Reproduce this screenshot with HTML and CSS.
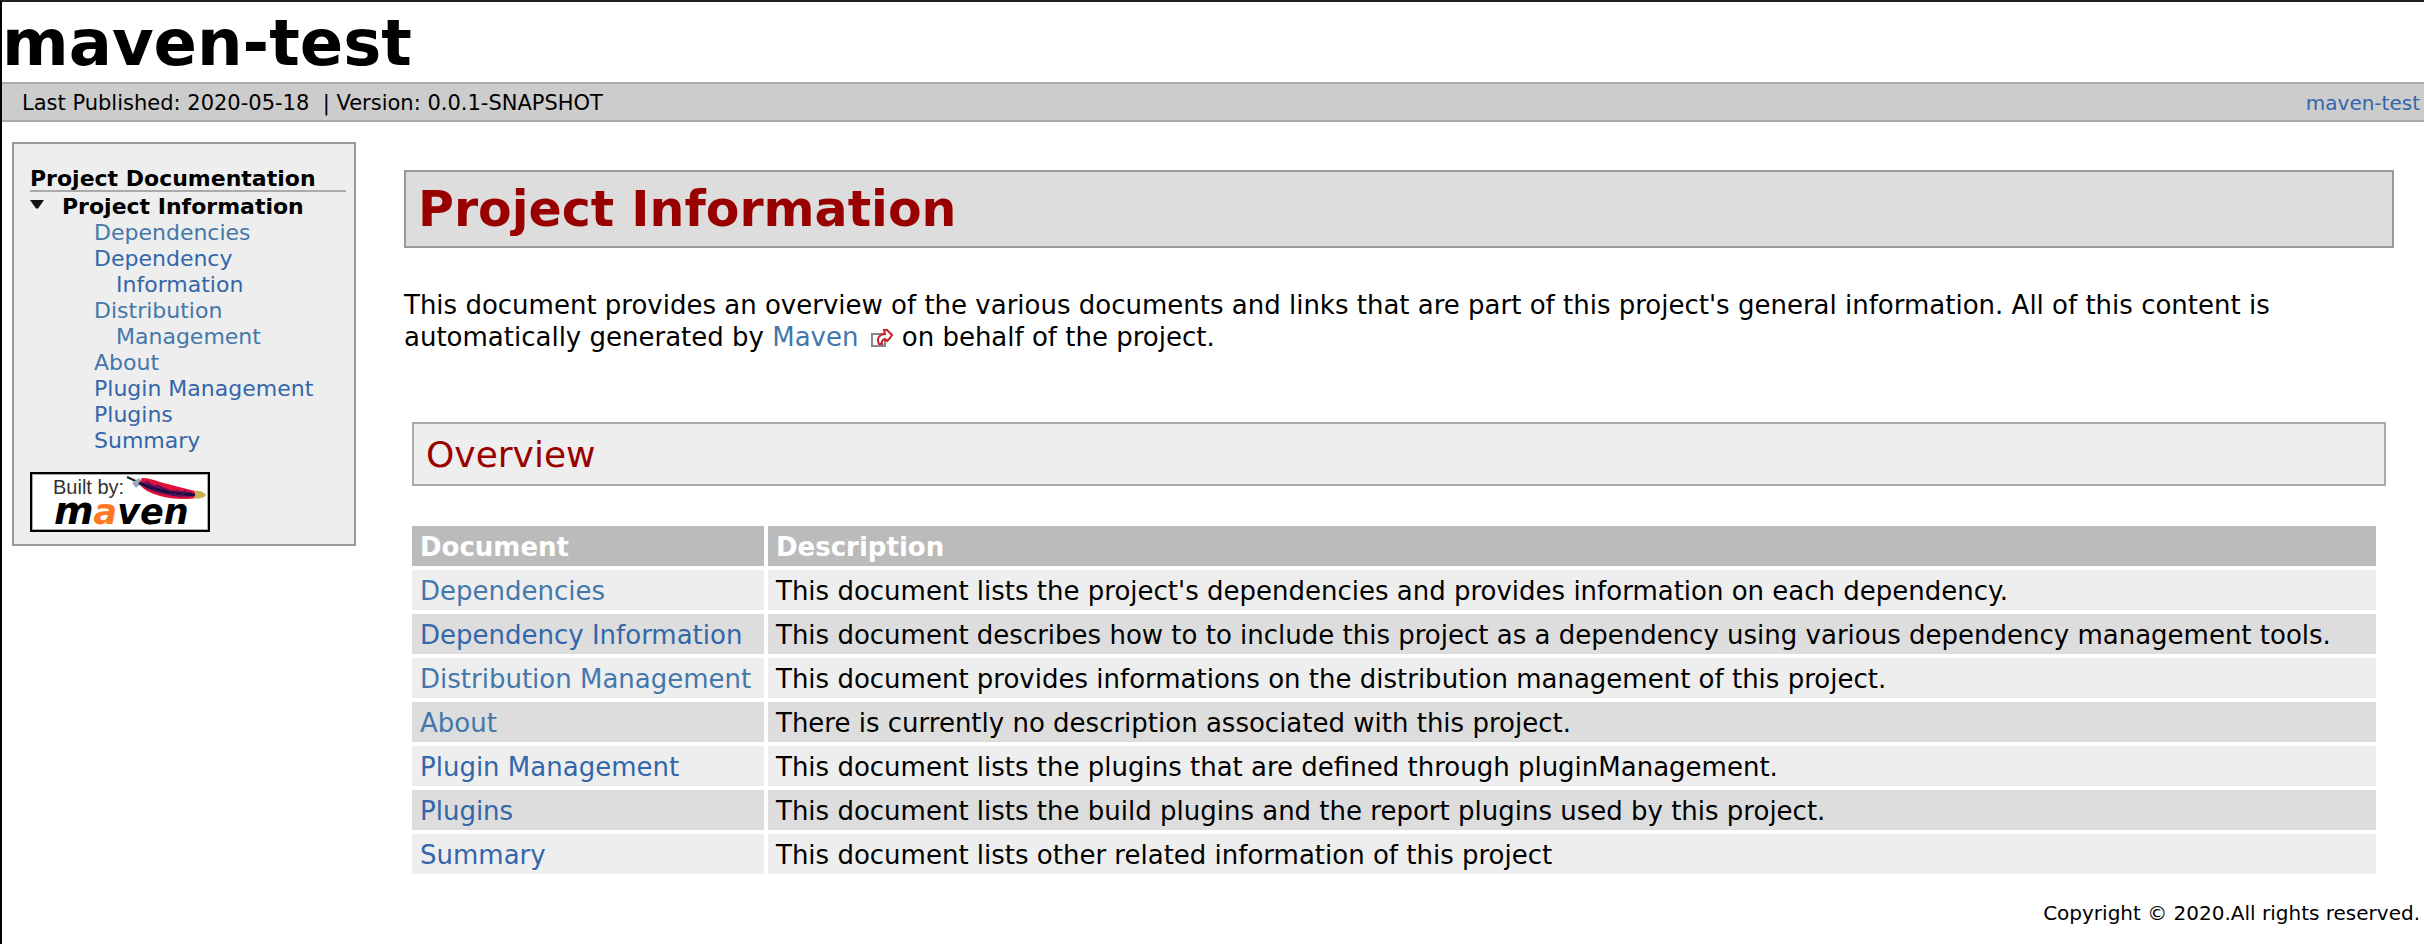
FILE: index.html
```html
<!DOCTYPE html>
<html lang="en">
<head>
<meta charset="utf-8">
<title>maven-test – Project Information</title>
<link rel="stylesheet" href="styles.css">
</head>
<body>
<header class="banner">maven-test</header>
<div class="breadcrumbs">
  <div class="published">Last Published: 2020-05-18 &nbsp;| Version: 0.0.1-SNAPSHOT</div>
  <a href="#">maven-test</a>
</div>
<div class="columns">
  <nav class="sidebar">
    <h5>Project Documentation</h5>
    <div class="group">
      <svg class="marker" width="14" height="9" viewBox="0 0 14 9" aria-hidden="true"><path d="M0 0H14L8 8.500H6Z" fill="#111"/></svg>
      <strong>Project Information</strong>
    </div>
    <ul class="menu">
      <li><a class="visited" href="#">Dependencies</a></li>
      <li><a href="#">Dependency Information</a></li>
      <li><a class="visited" href="#">Distribution Management</a></li>
      <li><a class="visited" href="#">About</a></li>
      <li><a href="#">Plugin Management</a></li>
      <li><a href="#">Plugins</a></li>
      <li><a href="#">Summary</a></li>
    </ul>
    <a class="powered" href="#" aria-label="Built by Maven">
      <svg width="180" height="60" viewBox="0 0 180 60">
        <rect x="1" y="1" width="178" height="58" fill="#fff" stroke="#000" stroke-width="2"/>
        <rect x="2.500" y="2.500" width="175" height="55" fill="none" stroke="#aaa"/>
        <text class="built" x="23" y="22">Built by:</text>
        <text class="logo" x="24" y="52"><tspan class="logo-m">m</tspan><tspan class="logo-a">a</tspan>ven</text>
        <path d="M97 5L112 12" stroke="#222" stroke-width="2" fill="none"/>
        <path d="M102 11L109 6L113 10L106 16Z" fill="#9ab"/>
        <path d="M109 12L112 6C118 6 124 8 130 10L153 16L165 19L166 26C156 28 140 27 130 24C120 21 114 18 109 12Z" fill="#e01038"/>
        <path d="M110 10C118 10 128 15 138 18L162 20L160 25C144 25 124 22 112 14Z" fill="#6a1464"/>
        <path d="M109 11C124 18 142 22 165 23" stroke="#1c0e3c" stroke-width="3" fill="none"/>
        <path d="M126 13L142 20M148 18L143 24M155 18L150 25M116 9L124 15" stroke="#4d105c" stroke-width="1.500"/>
        <path d="M164 19C170 18 174 20 176 23C173 27 168 27 163 26L166 23Z" fill="#c9b050"/>
      </svg>
    </a>
  </nav>
  <main class="content">
    <h1>Project Information</h1>
    <p>This document provides an overview of the various documents and links that are part of this project's general information. All of this content is automatically generated by <a class="visited external" href="#">Maven<svg width="22" height="20" viewBox="0 0 22 20" aria-hidden="true"><rect x="1" y="6" width="13" height="12" fill="#fff" stroke="#888" stroke-width="2"/><path d="M8 16C5 10 9 6 14 6L13 2L16 2L21 7L19 10L16 13L14 11C11 12 10 14 11 16Z" fill="#fff" stroke="#c8202c" stroke-width="2"/></svg></a> on behalf of the project.</p>
    <section class="section">
      <h2>Overview</h2>
      <table>
        <colgroup><col class="name-col"><col></colgroup>
        <thead><tr><th scope="col">Document</th><th scope="col">Description</th></tr></thead>
        <tbody>
          <tr><td><a class="visited" href="#">Dependencies</a></td><td>This document lists the project's dependencies and provides information on each dependency.</td></tr>
          <tr><td><a href="#">Dependency Information</a></td><td>This document describes how to to include this project as a dependency using various dependency management tools.</td></tr>
          <tr><td><a class="visited" href="#">Distribution Management</a></td><td>This document provides informations on the distribution management of this project.</td></tr>
          <tr><td><a class="visited" href="#">About</a></td><td>There is currently no description associated with this project.</td></tr>
          <tr><td><a href="#">Plugin Management</a></td><td>This document lists the plugins that are defined through pluginManagement.</td></tr>
          <tr><td><a href="#">Plugins</a></td><td>This document lists the build plugins and the report plugins used by this project.</td></tr>
          <tr><td><a href="#">Summary</a></td><td>This document lists other related information of this project</td></tr>
        </tbody>
      </table>
    </section>
  </main>
</div>
<footer class="footer">Copyright © 2020.All rights reserved.</footer>
</body>
</html>
```

FILE: styles.css
```css
* {
  box-sizing: border-box;
}

body {
  margin: 0;
  min-height: 100vh;
  border-top: 2px solid #222;
  border-left: 2px solid #000;
  background: #fff;
  color: #000;
  font-family: Verdana, "DejaVu Sans", sans-serif;
  font-size: 26px;
  line-height: 32px;
}

a {
  color: #36a;
  text-decoration: none;
}

a.visited {
  color: #47a;
}

.banner {
  padding-top: 2px;
  font-size: 64px;
  font-weight: bold;
  line-height: 78px;
}

.breadcrumbs {
  display: flex;
  justify-content: space-between;
  padding: 7px 4px 5px 20px;
  border: 2px solid #aaa;
  border-width: 2px 0;
  background: #ccc;
  font-size: 20px;
  line-height: 24px;
}

.published {
  font-size: 21px;
}

.columns {
  display: flex;
  align-items: flex-start;
  gap: 48px;
  padding: 20px 30px 0 10px;
}

.sidebar {
  flex: 0 0 344px;
  padding: 24px 8px 12px 16px;
  border: 2px solid #999;
  background: #eee;
  font-size: 22px;
  line-height: 26px;
}

.sidebar h5 {
  margin: 0;
  border-bottom: 2px solid #aaa;
  font-size: 22px;
  line-height: 22px;
}

.group {
  display: flex;
  align-items: flex-start;
  gap: 18px;
  padding-top: 2px;
}

.marker {
  margin-top: 6px;
}

.menu {
  margin: 0 0 18px;
  padding: 0 8px 0 86px;
  list-style: none;
}

.menu li {
  text-indent: -22px;
}

.powered,
.powered svg {
  display: block;
}

.built {
  fill: #333;
  font-family: "Liberation Sans", Arial, sans-serif;
  font-size: 20px;
}

.logo {
  font-family: "DejaVu Sans", sans-serif;
  font-size: 35px;
  font-style: italic;
  font-weight: bold;
}

.logo-m {
  font-size: 38px;
}

.logo-a {
  fill: #f72;
}

.content {
  flex: 1;
  min-width: 0;
  padding-top: 28px;
}

h1 {
  margin: 0 0 41px;
  padding: 9px 12px 7px;
  border: 2px solid #999;
  background: #ddd;
  color: #900;
  font-size: 49px;
  line-height: 58px;
}

p {
  margin: 0;
}

.external svg {
  margin-left: 13px;
  vertical-align: -2px;
}

.section {
  padding: 69px 8px 0;
}

h2 {
  margin: 0 0 40px;
  padding: 9px 12px 7px;
  border: 2px solid #aaa;
  background: #eee;
  color: #900;
  font-size: 36px;
  font-weight: normal;
  line-height: 44px;
}

table {
  width: calc(100% - 2px);
  margin: -4px;
  border-spacing: 4px;
}

.name-col {
  width: 352px;
}

th,
td {
  padding: 5px 8px 3px;
  text-align: left;
}

th {
  background: #bbb;
  color: #fff;
}

tbody tr {
  background: #eee;
}

tbody tr:nth-child(even) {
  background: #ddd;
}

td:first-child {
  white-space: nowrap;
}

.footer {
  padding: 26px 4px 16px;
  font-size: 20px;
  line-height: 26px;
  text-align: right;
}
```
